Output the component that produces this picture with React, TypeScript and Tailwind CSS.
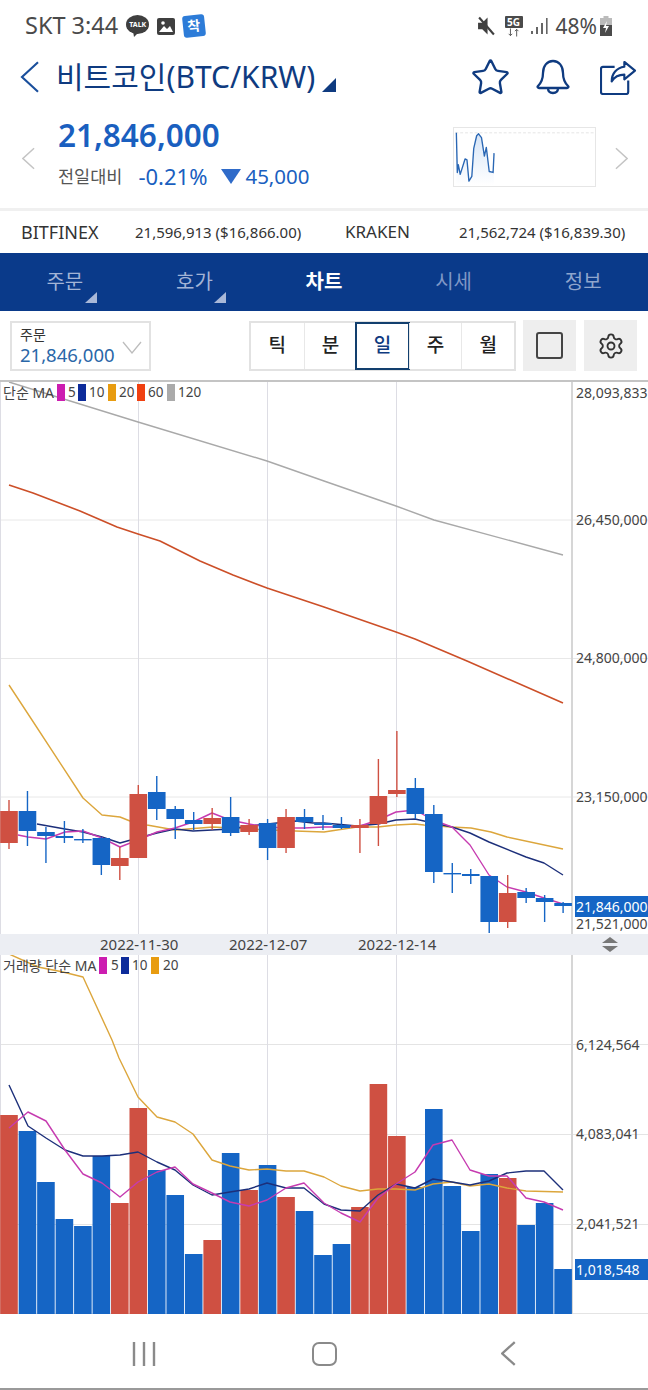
// Bitcoin chart screen
import { Settings, Star } from 'lucide-react';

const BLUE = '#1565c5';
const RED = '#cf5042';

type Pt = [number, number];

const toPoints = (pts: Pt[]) => pts.map((p) => p.join(',')).join(' ');
const centerX = (i: number) => 9 + 18.47 * i;

// [wick top, body top, body bottom, wick bottom, is red]
const candles: [number, number, number, number, boolean][] = [
  [800, 811, 843, 849, true],
  [791, 811, 831, 846, false],
  [827, 832, 836, 863, false],
  [821, 836, 838, 843, false],
  [829, 839, 840, 843, false],
  [837, 838, 865, 875, false],
  [847, 858, 866, 880, true],
  [785, 794, 858, 858, true],
  [776, 792, 809, 820, false],
  [806, 809, 819, 839, false],
  [812, 820, 824, 830, false],
  [808, 818, 824, 830, true],
  [797, 817, 833, 836, false],
  [819, 825, 832, 835, true],
  [819, 823, 848, 860, false],
  [809, 817, 848, 853, true],
  [809, 817, 822, 829, false],
  [815, 823, 825, 830, false],
  [817, 825, 828, 829, false],
  [819, 825, 828, 853, true],
  [759, 796, 824, 846, true],
  [731, 790, 794, 797, true],
  [778, 788, 814, 819, false],
  [805, 814, 872, 883, false],
  [863, 873, 874, 893, false],
  [869, 874, 876, 884, false],
  [876, 876, 922, 933, false],
  [875, 893, 922, 928, true],
  [888, 892, 898, 903, false],
  [895, 898, 902, 922, false],
  [902, 903, 906, 913, false],
];

const priceGray: Pt[] = [[9, 382], [138, 422], [267, 461], [324, 481], [396, 506], [434, 520], [563, 555]];
const priceRed: Pt[] = [[9, 485], [33, 493], [80, 511], [117, 527], [138, 534], [160, 541], [200, 561], [233, 575], [267, 588], [324, 607], [396, 632], [415, 639], [467, 661], [563, 703]];
const priceOrange: Pt[] = [[9, 685], [32, 720], [83, 798], [102, 815], [120, 817], [130, 821], [147, 825], [175, 830], [213, 827], [250, 829], [295, 831], [324, 832], [357, 827], [378, 827], [396, 825], [415, 824], [424, 825], [451, 827], [471, 828], [491, 832], [507, 837], [563, 849]];
const priceNavy: Pt[] = [[37, 824], [65, 829], [83, 832], [102, 837], [120, 843], [138, 838], [157, 833], [175, 829], [193, 831], [212, 830], [230, 829], [249, 826], [295, 821], [313, 823], [324, 823], [357, 826], [378, 824], [396, 820], [415, 819], [433, 823], [452, 827], [470, 833], [489, 842], [526, 857], [544, 863], [563, 875]];
const priceMagenta: Pt[] = [[18, 835], [28, 837], [46, 839], [65, 832], [83, 831], [102, 838], [120, 847], [138, 840], [157, 832], [175, 828], [193, 822], [212, 813], [230, 820], [249, 824], [267, 827], [286, 828], [304, 828], [324, 827], [341, 827], [360, 826], [378, 820], [396, 812], [415, 810], [433, 820], [452, 827], [470, 845], [489, 875], [507, 887], [526, 892], [544, 898], [563, 904]];

// [bar top, is red]
const volumes: [number, boolean][] = [
  [1115, true], [1131, false], [1182, false], [1219, false], [1226, false], [1156, false],
  [1203, true], [1108, true], [1170, false], [1195, false], [1254, false], [1240, true],
  [1153, false], [1190, true], [1165, false], [1197, true], [1211, false], [1255, false],
  [1244, false], [1207, true], [1084, true], [1136, true], [1187, false], [1109, false],
  [1186, false], [1231, false], [1174, false], [1178, true], [1225, false], [1203, false], [1269, false],
];

const volNavy: Pt[] = [[9, 1085], [28, 1126], [46, 1138], [65, 1150], [83, 1156], [102, 1156], [120, 1155], [138, 1152], [157, 1162], [175, 1170], [193, 1185], [212, 1195], [230, 1192], [249, 1189], [267, 1183], [286, 1188], [304, 1188], [324, 1204], [341, 1210], [360, 1211], [378, 1195], [396, 1184], [415, 1188], [433, 1179], [452, 1182], [470, 1185], [489, 1181], [507, 1173], [526, 1171], [544, 1171], [563, 1190]];
const volMagenta: Pt[] = [[9, 1128], [28, 1112], [46, 1121], [65, 1150], [83, 1174], [102, 1183], [120, 1197], [138, 1182], [157, 1172], [175, 1167], [193, 1184], [212, 1193], [230, 1202], [249, 1206], [267, 1200], [286, 1188], [304, 1183], [324, 1203], [341, 1213], [360, 1222], [378, 1198], [396, 1184], [415, 1172], [433, 1145], [452, 1140], [470, 1170], [489, 1176], [507, 1176], [526, 1198], [544, 1202], [563, 1210]];
const volOrange: Pt[] = [[9, 954], [38, 967], [63, 972], [83, 977], [112, 1040], [119, 1058], [138, 1097], [157, 1117], [175, 1122], [193, 1134], [212, 1160], [230, 1166], [249, 1170], [267, 1169], [286, 1171], [304, 1171], [324, 1177], [341, 1186], [360, 1191], [378, 1189], [396, 1189], [415, 1190], [433, 1184], [452, 1182], [470, 1186], [489, 1184], [507, 1188], [526, 1191], [563, 1192]];

const sparkline: Pt[] = [[454, 132], [455, 173], [456, 165], [458, 175], [463, 159], [465, 160], [467, 182], [470, 177], [472, 148], [475, 135], [477, 133], [480, 137], [483, 156], [485, 147], [488, 172], [492, 173], [493, 153]];

function Line({ pts, color, width = 1.4 }: { pts: Pt[]; color: string; width?: number }) {
  return <polyline points={toPoints(pts)} fill="none" stroke={color} strokeWidth={width} strokeLinejoin="round" />;
}

function Swatch({ className }: { className: string }) {
  return <span className={`block w-2 h-[17px] ${className}`} />;
}

function Chevron({ dir, className }: { dir: 'left' | 'right'; className: string }) {
  return (
    <svg viewBox="0 0 14 24" className={className} fill="none" stroke="currentColor" strokeWidth="1.6">
      <polyline points={dir === 'left' ? '13,1 1,12 13,23' : '1,1 13,12 1,23'} />
    </svg>
  );
}

function StatusBar() {
  return (
    <div className="h-[50px] pt-[2px] pl-[25px] pr-[36px] flex items-center text-[#4a4a4a]">
      <span className="text-[23.5px] leading-none">SKT 3:44</span>
      <span className="relative ml-[8px] w-[23px] h-[22px]">
        <svg viewBox="0 0 23 22" className="absolute inset-0 w-full h-full">
          <ellipse cx="11.5" cy="9.5" rx="11.5" ry="9.5" fill="#3f3f3f" />
          <polygon points="7,16 12,18 8,22" fill="#3f3f3f" />
        </svg>
        <span className="absolute inset-x-0 top-[5px] text-center text-[7px] leading-[9px] font-bold text-white">TALK</span>
      </span>
      <svg viewBox="0 0 18 17" className="ml-[8px] w-[18px] h-[17px]">
        <rect width="18" height="17" rx="2" fill="#3f3f3f" />
        <polygon points="2,14 7,8 10,11 13,8 16,14" fill="#fff" />
        <circle cx="6" cy="5" r="1.8" fill="#fff" />
      </svg>
      <span className="ml-[8px] w-[22px] h-[22px] rounded-[3px] bg-[#2d7cd8] rotate-[-6deg] text-white text-[14px] font-bold leading-[21px] text-center">착</span>
      <svg viewBox="0 0 18 18" className="ml-auto w-[19px] h-[20px]">
        <polygon points="1,6 5,6 10,1 10,17 5,12 1,12" fill="#3f3f3f" />
        <line x1="2" y1="1" x2="16" y2="17" stroke="#3f3f3f" strokeWidth="2" />
      </svg>
      <span className="ml-[9px] w-[18px] flex flex-col items-center">
        <span className="w-full h-[12px] bg-[#4a4a4a] rounded-[1px] text-white text-[10px] font-bold leading-[12px] text-center">5G</span>
        <svg viewBox="0 0 18 9" className="w-[16px] h-[9px]" stroke="#4a4a4a" fill="none">
          <path d="M5 0v8M3 6l2 2 2-2M12 9V1M10 3l2-2 2 2" />
        </svg>
      </span>
      <svg viewBox="0 0 17 16" className="ml-[8px] w-[17px] h-[16px]" fill="#666">
        <rect x="0" y="13" width="2" height="3" />
        <rect x="5" y="9" width="2" height="7" />
        <rect x="10" y="5" width="2" height="11" />
        <rect x="15" y="0" width="1.6" height="16" />
      </svg>
      <span className="ml-[8px] text-[21px] leading-none">48%</span>
      <svg viewBox="0 0 12 20" className="ml-[3px] w-[12px] h-[20px]">
        <rect x="3.5" y="0" width="5" height="2.5" fill="#bbb" />
        <rect x="0" y="2" width="12" height="7" fill="#bbb" />
        <rect x="0" y="9" width="12" height="11" fill="#4a4a4a" />
        <polygon points="7,5 3,12 6,12 5,17 9,10 6,10" fill="#fff" />
      </svg>
    </div>
  );
}

function TitleBar() {
  return (
    <div className="h-[54px] pl-[20px] flex items-center text-[#0f3b80]">
      <Chevron dir="left" className="w-[20px] h-[32px] text-[#1a4f9c]" />
      <span className="ml-[16px] text-[30px] leading-none">비트코인(BTC/KRW)</span>
      <svg viewBox="0 0 14 14" className="ml-[7px] mt-[16px] w-[14px] h-[14px]">
        <polygon points="14,0 14,14 0,14" fill="#0f3b80" />
      </svg>
      <Star className="ml-auto w-[41px] h-[41px]" strokeWidth={1.4} />
      <svg viewBox="0 0 34 36" className="ml-[25px] w-[34px] h-[36px]" fill="none" stroke="currentColor" strokeWidth="2.3" strokeLinejoin="round">
        <path d="M17 2c-6 0-10 5-10 12 0 6-1 9-5 13-1 1 0 2 1 2h28c1 0 2-1 1-2-4-4-5-7-5-13 0-7-4-12-10-12z" />
        <path d="M12 29c0 3 2 5 5 5s5-2 5-5" />
      </svg>
      <svg viewBox="0 0 38 36" className="ml-[30px] mr-[11px] w-[37px] h-[35px]" fill="none" stroke="currentColor" strokeWidth="2.2" strokeLinejoin="round">
        <path d="M15 7H3a2 2 0 0 0-2 2v24a2 2 0 0 0 2 2h24a2 2 0 0 0 2-2V21" />
        <path d="M25 2l11 9-11 9v-5c-6 0-10 2-13 7 0-8 5-14 13-15z" />
      </svg>
    </div>
  );
}

function PriceBlock() {
  return (
    <div className="h-[104px] pl-[22px] pr-[20px] flex items-center">
      <Chevron dir="left" className="mt-[5px] w-[13px] h-[23px] text-[#c4c4c4]" />
      <div className="ml-[23px] self-start pt-[13px] flex flex-col">
        <span className="text-[31.5px] leading-[36px] font-semibold text-[#1a5fbf]">21,846,000</span>
        <div className="mt-[10px] flex items-center h-[26px]">
          <span className="text-[17.5px] text-[#555]">전일대비</span>
          <span className="ml-[16px] text-[22px] text-[#1a5fbf]">-0.21%</span>
          <svg viewBox="0 0 20 15" className="ml-[14px] w-[20px] h-[15px]">
            <polygon points="0,0 20,0 10,15" fill="#2f6bc9" />
          </svg>
          <span className="ml-[4px] text-[20.5px] text-[#1a5fbf]">45,000</span>
        </div>
      </div>
      <div className="ml-auto flex items-center">
        <svg viewBox="453 127 143 60" className="mt-[2px] w-[143px] h-[60px] border border-[#e6e6e6]">
          <defs>
            <linearGradient id="spark" x1="0" y1="0" x2="0" y2="1">
              <stop offset="0" stopColor="#d5e4f7" />
              <stop offset="1" stopColor="#ffffff" />
            </linearGradient>
          </defs>
          <line x1="453" y1="132" x2="596" y2="132" stroke="#e4e4e4" strokeDasharray="3 2" />
          <polygon points={`454,186 ${toPoints(sparkline)} 493,186`} fill="url(#spark)" />
          <Line pts={sparkline} color="#2a67b4" />
        </svg>
        <Chevron dir="right" className="ml-[19px] mt-[5px] w-[13px] h-[23px] text-[#c4c4c4]" />
      </div>
    </div>
  );
}

function ExchangeRow() {
  return (
    <div className="h-[45px] border-t-[3px] border-[#f0f0f0] pl-[21px] pr-[21px] flex items-center text-[#333]">
      <span className="w-[114px] text-[18px]">BITFINEX</span>
      <span className="w-[210px] text-[15px]">21,596,913 ($16,866.00)</span>
      <span className="w-[114px] text-[17px]">KRAKEN</span>
      <span className="text-[15px]">21,562,724 ($16,839.30)</span>
    </div>
  );
}

function NavTab({ label, className, arrow }: { label: string; className: string; arrow?: boolean }) {
  return (
    <div className="relative flex items-center justify-center">
      <span className={`text-[20px] ${className}`}>{label}</span>
      {arrow && (
        <svg viewBox="0 0 12 11" className="absolute right-[33px] bottom-[8px] w-[12px] h-[11px]">
          <polygon points="12,0 12,11 0,11" fill="#a9b8d8" />
        </svg>
      )}
    </div>
  );
}

function NavTabs() {
  return (
    <div className="h-[58px] bg-[#0a3a8a] grid grid-cols-5">
      <NavTab label="주문" className="text-[#a3b4d6]" arrow />
      <NavTab label="호가" className="text-[#a3b4d6]" arrow />
      <NavTab label="차트" className="text-white font-bold" />
      <NavTab label="시세" className="text-[#7f97c6]" />
      <NavTab label="정보" className="text-[#8fa5cd]" />
    </div>
  );
}

function Toolbar() {
  const periods = ['틱', '분', '일', '주', '월'];
  return (
    <div className="h-[69px] pl-[10px] flex items-center">
      <div className="relative w-[141px] h-[50px] border-2 border-[#e2e2e2] pl-[8px] flex flex-col justify-center">
        <span className="text-[14px] leading-[18px] text-[#333]">주문</span>
        <span className="text-[18.5px] leading-[22px] text-[#2a67a8]">21,846,000</span>
        <svg viewBox="0 0 20 13" className="absolute right-[7px] top-[18px] w-[20px] h-[13px]" fill="none" stroke="#bdbdbd" strokeWidth="1.3">
          <polyline points="1,1 10,12 19,1" />
        </svg>
      </div>
      <div className="ml-[98px] w-[267px] h-[50px] border-2 border-[#e2e2e2] grid grid-cols-5">
        {periods.map((p) => (
          <div
            key={p}
            className={
              p === '일'
                ? 'flex items-center justify-center text-[19px] text-[#0f3b80] font-medium outline-2 outline-[#123f6e] -outline-offset-1'
                : 'flex items-center justify-center text-[19px] text-[#222] font-medium border-l border-[#e8e8e8] first:border-l-0'
            }
          >
            {p}
          </div>
        ))}
      </div>
      <div className="ml-[7px] w-[53px] h-[51px] bg-[#eeeeee] flex items-center justify-center">
        <span className="block w-[27px] h-[27px] rounded-[3px] border-2 border-[#444]" />
      </div>
      <div className="ml-[8px] w-[53px] h-[51px] bg-[#eeeeee] flex items-center justify-center">
        <Settings className="w-[28px] h-[28px] text-[#333]" strokeWidth={1.6} />
      </div>
    </div>
  );
}

function AxisLabel({ text, className }: { text: string; className: string }) {
  return (
    <span className={`absolute left-[576px] w-[72px] h-[14px] whitespace-nowrap text-[14px] leading-[14px] text-[#444] ${className}`}>
      {text}
    </span>
  );
}

function PricePane() {
  return (
    <div className="relative h-[554px] border-t-2 border-[#c4c4c4] overflow-hidden">
      <svg viewBox="0 382 648 552" className="absolute inset-0 w-[648px] h-[552px]">
        {[520, 658.5, 797].map((y) => (
          <line key={y} x1="0" x2="648" y1={y} y2={y} stroke="#e8e8e8" />
        ))}
        {[0.5, 138.5, 267.5, 396.5].map((x) => (
          <line key={x} x1={x} x2={x} y1="382" y2="934" stroke="#dddde4" />
        ))}
        <line x1="572" x2="572" y1="382" y2="934" stroke="#d6d6d6" strokeWidth="2" />
        <Line pts={priceGray} color="#a9a9a9" />
        <Line pts={priceRed} color="#cc4f28" width={1.6} />
        <Line pts={priceOrange} color="#dca63c" />
        <Line pts={priceNavy} color="#1c2f7a" />
        <Line pts={priceMagenta} color="#c63bb0" />
        {candles.map(([hi, top, bottom, lo, red], i) => {
          const x = centerX(i);
          const color = red ? RED : BLUE;
          return (
            <g key={i}>
              <line x1={x} x2={x} y1={hi} y2={lo} stroke={color} strokeWidth="1.4" />
              <rect x={x - 8.8} y={top} width="17.6" height={Math.max(bottom - top, 1.4)} fill={color} />
            </g>
          );
        })}
      </svg>
      <div className="absolute left-[3px] top-[2px] h-[17px] flex items-center text-[13.5px] text-[#444]">
        <span className="w-[54px] text-[14px] whitespace-nowrap">단순 MA</span>
        <Swatch className="bg-[#cc1db0]" />
        <span className="ml-[3px] w-[10px]">5</span>
        <Swatch className="bg-[#0d2b9a]" />
        <span className="ml-[3px] w-[19px]">10</span>
        <Swatch className="bg-[#e89c10]" />
        <span className="ml-[3px] w-[18px]">20</span>
        <Swatch className="bg-[#f04010]" />
        <span className="ml-[3px] w-[19px]">60</span>
        <Swatch className="bg-[#aaaaaa]" />
        <span className="ml-[3px]">120</span>
      </div>
      <AxisLabel text="28,093,833" className="top-[4px]" />
      <AxisLabel text="26,450,000" className="top-[131px]" />
      <AxisLabel text="24,800,000" className="top-[269px]" />
      <AxisLabel text="23,150,000" className="top-[408px]" />
      <span className="absolute left-[575px] top-[514px] w-[73px] h-[21px] whitespace-nowrap bg-[#1565c5] pl-[1px] text-[14px] leading-[21px] text-white">21,846,000</span>
      <AxisLabel text="21,521,000" className="top-[535px]" />
    </div>
  );
}

function DateBar() {
  return (
    <div className="relative h-[21px] bg-[#eceef3] text-[15px] leading-[21px] text-[#444]">
      <span className="absolute left-[100px]">2022-11-30</span>
      <span className="absolute left-[229px]">2022-12-07</span>
      <span className="absolute left-[358px]">2022-12-14</span>
      <svg viewBox="0 0 16 15" className="absolute left-[602px] top-[3px] w-[16px] h-[15px]" fill="#777">
        <polygon points="8,0 16,6 0,6" />
        <polygon points="0,9 16,9 8,15" />
      </svg>
    </div>
  );
}

function VolumePane() {
  return (
    <div className="relative h-[359px] overflow-hidden">
      <svg viewBox="0 955 648 359" className="absolute inset-0 w-[648px] h-[359px]">
        {[1044.5, 1134.5, 1224.5, 1313.5].map((y) => (
          <line key={y} x1="0" x2="648" y1={y} y2={y} stroke="#e4e4e4" />
        ))}
        {[0.5, 138.5, 267.5, 396.5].map((x) => (
          <line key={x} x1={x} x2={x} y1="955" y2="1314" stroke="#dddde4" />
        ))}
        <line x1="572" x2="572" y1="955" y2="1314" stroke="#d6d6d6" strokeWidth="2" />
        {volumes.map(([top, red], i) => (
          <rect key={i} x={centerX(i) - 8.8} y={top} width="17.6" height={1314 - top} fill={red ? RED : BLUE} />
        ))}
        <Line pts={volOrange} color="#dca63c" />
        <Line pts={volNavy} color="#1c2f7a" />
        <Line pts={volMagenta} color="#c63bb0" />
      </svg>
      <div className="absolute left-[3px] top-[2px] h-[17px] flex items-center text-[13.5px] text-[#444]">
        <span className="w-[96px] text-[14px] whitespace-nowrap">거래량 단순 MA</span>
        <Swatch className="bg-[#cc1db0]" />
        <span className="ml-[4px] w-[10px]">5</span>
        <Swatch className="bg-[#0d2b9a]" />
        <span className="ml-[3px] w-[19px]">10</span>
        <Swatch className="bg-[#e89c10]" />
        <span className="ml-[4px]">20</span>
      </div>
      <AxisLabel text="6,124,564" className="top-[83px]" />
      <AxisLabel text="4,083,041" className="top-[172px]" />
      <AxisLabel text="2,041,521" className="top-[262px]" />
      <span className="absolute left-[575px] top-[304px] w-[73px] h-[21px] bg-[#1565c5] pl-[1px] text-[14px] leading-[21px] text-white">1,018,548</span>
    </div>
  );
}

function SystemNav() {
  return (
    <div className="h-[76px] pt-[5px] border-b-2 border-[#9a9a9a] grid grid-cols-3 items-center justify-items-center text-[#8a8a8a]">
      <svg viewBox="0 0 24 24" className="ml-[72px] w-[24px] h-[24px]" stroke="currentColor" strokeWidth="2.4">
        <path d="M2 0v24M12 0v24M22 0v24" />
      </svg>
      <span className="block w-[25px] h-[24px] rounded-[7px] border-[2.5px] border-current" />
      <Chevron dir="left" className="mr-[64px] w-[15px] h-[25px] stroke-[2.2]" />
    </div>
  );
}

export default function App() {
  return (
    <div className="w-[648px] h-[1390px] bg-white overflow-hidden font-['Noto_Sans','Noto_Sans_CJK_KR',sans-serif]">
      <StatusBar />
      <TitleBar />
      <PriceBlock />
      <ExchangeRow />
      <NavTabs />
      <Toolbar />
      <PricePane />
      <DateBar />
      <VolumePane />
      <SystemNav />
    </div>
  );
}
